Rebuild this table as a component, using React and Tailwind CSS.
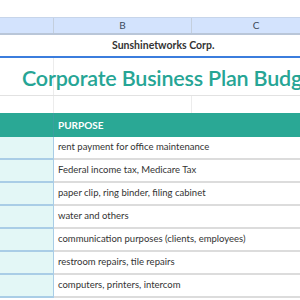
export default function App() {
  const rows = [
    "rent payment for office maintenance",
    "Federal income tax, Medicare Tax",
    "paper clip, ring binder, filing cabinet",
    "water and others",
    "communication purposes (clients, employees)",
    "restroom repairs, tile repairs",
    "computers, printers, intercom",
  ];
  const font = { fontFamily: "Lato, 'Open Sans', sans-serif" };
  return (
    <div className="w-[300px] h-[300px] overflow-hidden bg-white" style={font}>
      <div className="w-[320px]">
        <div className="h-[17px] bg-white" />
        <div className="flex h-[18px] bg-[#d3e3fd] border-t border-[#c7d5ea] border-b-2 border-b-[#b9c6d8] text-[10px] text-[#3c4a5c]">
          <div className="w-[54px] border-r border-[#c4cfdd]" />
          <div className="w-[138px] border-r border-[#c4cfdd] flex items-center justify-center">B</div>
          <div className="w-[128px] flex items-center justify-center">C</div>
        </div>
        <div className="flex h-[21px] text-[10.5px] font-bold text-[#333]">
          <div className="w-[54px]" />
          <div className="flex-1 flex items-center pl-[58px]">Sunshinetworks Corp.</div>
        </div>
        <div className="h-[2px] bg-[#3b7ddd]" />
        <div className="flex h-[38px] border-b border-[#e2e2e2]">
          <div className="w-[54px] border-r border-[#ececec]" />
          <div className="flex-1 relative">
            <div className="absolute left-[-32px] top-[4px] whitespace-nowrap text-[21.5px] font-semibold tracking-[-0.2px] text-[#26a595]" style={font}>
              Corporate Business Plan Budget
            </div>
          </div>
        </div>
        <div className="flex h-[17px]">
          <div className="w-[54px] border-r border-[#ececec]" />
          <div className="w-[138px] border-r border-[#ececec]" />
        </div>
        <div className="flex h-[24px] bg-[#2aa895] text-white text-[10px] font-bold">
          <div className="w-[54px] border-r border-[#3a9fa0]" />
          <div className="flex items-center pl-[4px]">PURPOSE</div>
        </div>
        {rows.map((r) => (
          <div key={r} className="flex h-[23px]">
            <div className="w-[54px] bg-[#e3f7f6] border-b-2 border-[#a9cde6] border-r border-r-[#a9cde6]" />
            <div className="flex-1 flex items-center pl-[4px] text-[9.5px] text-[#333] border-b-2 border-[#dcdcdc] whitespace-nowrap">
              {r}
            </div>
          </div>
        ))}
      </div>
    </div>
  );
}
